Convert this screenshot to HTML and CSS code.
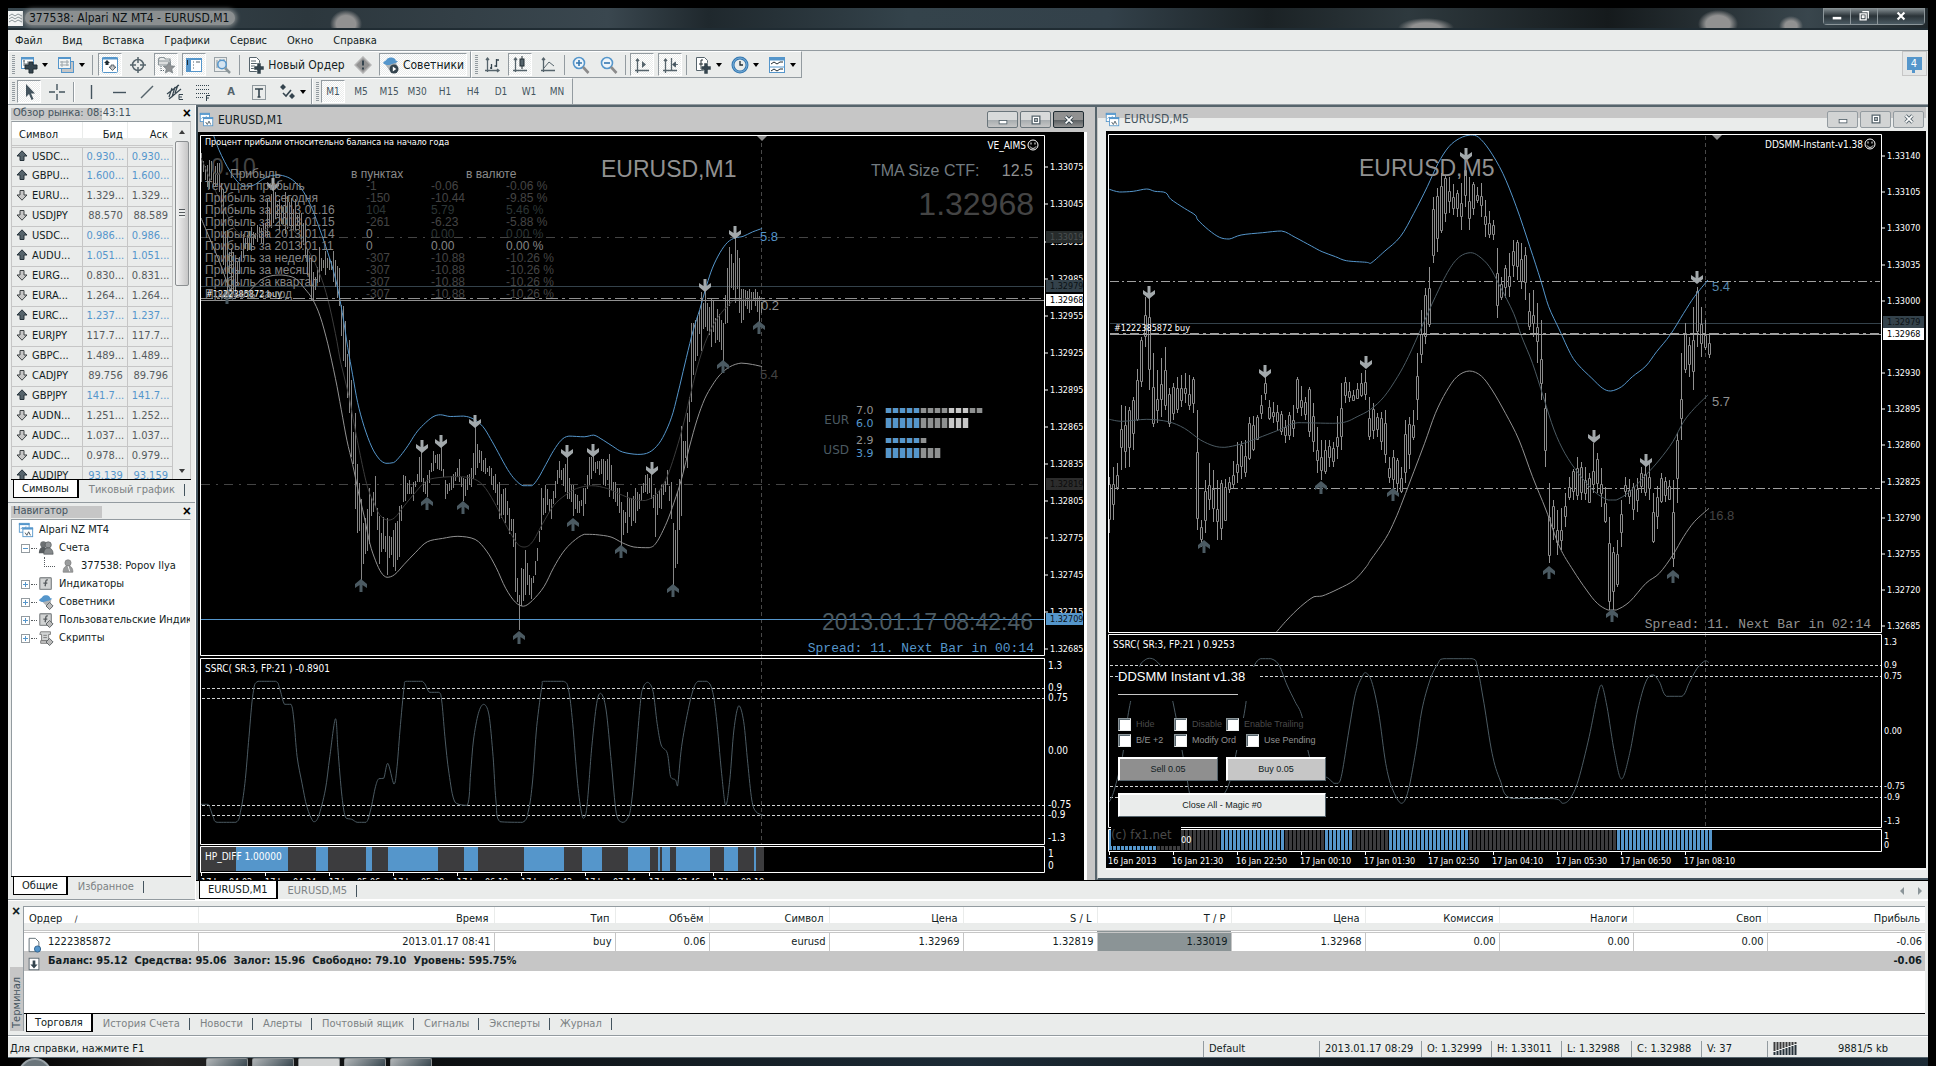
FILE: index.html
```html
<!DOCTYPE html>
<html lang="ru">
<head>
<meta charset="utf-8">
<title>377538: Alpari NZ MT4 - EURUSD,M1</title>
<link rel="stylesheet" href="styles.css">
</head>
<body>
<svg class="sprite" aria-hidden="true">
  <symbol id="i-charts" viewBox="0 0 18 18"><rect x="1.500" y="1.500" width="11" height="10" fill="#fff" stroke="#5596cb"/><path d="M1 2.500h12" stroke="#5596cb" stroke-width="2"/><path d="M3 8l2-2 2 2 2-3" fill="none" stroke="#5596cb"/><rect x="5.500" y="6.500" width="11" height="10" fill="#fff" stroke="#5596cb"/><path d="M5 7.500h12" stroke="#5596cb" stroke-width="2"/><path d="M8 12l2 3 2-4 2 4" fill="none" stroke="#3f4d55"/></symbol>
  <symbol id="i-newchart" viewBox="0 0 18 18"><rect x="1.500" y="1.500" width="12" height="11" fill="#fff" stroke="#5596cb"/><path d="M1 2.500h13" stroke="#5596cb" stroke-width="2"/><path d="M3 5h2M4 4v6M4 8h5M8 5v3" stroke="#6a757b"/><path d="M9 6h4v3h4v4h-4v4H9v-4H5V9h4z" fill="#34444e" stroke="#202c33"/></symbol>
  <symbol id="i-windows" viewBox="0 0 18 18"><rect x="4.500" y="5.500" width="12" height="11" fill="#c6c6c6" stroke="#5596cb"/><rect x="1.500" y="1.500" width="12" height="11" fill="#f2f4f4" stroke="#5596cb"/><path d="M1 2h13" stroke="#5596cb" stroke-width="2"/><path d="M3 6h9M3 9h9M5 5v6M10 4v6" stroke="#9aa3a8"/></symbol>
  <symbol id="i-watch" viewBox="0 0 18 18"><rect x="1.500" y="1.500" width="15" height="15" rx="1" fill="#fff" stroke="#5596cb"/><path d="M1 2.500h16" stroke="#5596cb" stroke-width="2"/><path d="M6 4l3 3H7.500v2h-3V7H3z" fill="#202c33"/><path d="M11.500 14.500l3.500-3.500H13V9h-3v2H8z" fill="#c6c6c6" stroke="#3f4d55" stroke-width=".8"/></symbol>
  <symbol id="i-target" viewBox="0 0 18 18"><circle cx="9" cy="9" r="5.500" fill="none" stroke="#56646c" stroke-width="1.500"/><path d="M9 1v6M9 11v6M1 9h6M11 9h6" stroke="#56646c" stroke-width="1.500"/></symbol>
  <symbol id="i-folder" viewBox="0 0 18 18"><path d="M1.500 9V3L3 1.500h4L8.500 3H13v2" fill="#eaeceb" stroke="#8b9599" stroke-width="1.200"/><path d="M1.500 5h12v4h-12z" fill="#dcdede" stroke="#8b9599"/><path d="M4 10v5M4 14.500h4" stroke="#56646c" stroke-dasharray="1 1"/><path d="M12 6l1.800 3.800 4 .4-3 2.800.9 4-3.700-2-3.700 2 .9-4-3-2.800 4-.4z" fill="#8f9294" stroke="#6a757b" stroke-width=".6"/></symbol>
  <symbol id="i-nav" viewBox="0 0 18 18"><rect x="1.500" y="2.500" width="15" height="13" fill="#fff" stroke="#5596cb"/><path d="M1 3h16" stroke="#5596cb" stroke-width="2"/><path d="M4 3v12" stroke="#5596cb" stroke-width="4"/><path d="M2.500 4v5" stroke="#202c33"/><path d="M8 6h1M11 6h4M8 9h1M8 12h1" stroke="#56646c"/></symbol>
  <symbol id="i-tester" viewBox="0 0 18 18"><rect x="1.500" y="1.500" width="12" height="14" fill="#eaeceb" stroke="#9aa3a8"/><path d="M4 4v8M7 3v4M11 3v4" stroke="#8b9599"/><circle cx="9" cy="8.500" r="4.200" fill="#d5e4f0" stroke="#5596cb" stroke-width="1.500"/><path d="M12 12l5 5" stroke="#8b9599" stroke-width="2.500"/></symbol>
  <symbol id="i-order" viewBox="0 0 18 18"><path d="M2.500 1.500h7l3 3v11h-10z" fill="#fff" stroke="#56646c"/><path d="M4 5h5M4 7.500h7M4 10h4M4 12.500h3" stroke="#56646c"/><path d="M10 7h4v3h3v4h-3v4h-4v-4H7v-4h3z" fill="#34444e" stroke="#eaeceb" stroke-width=".5"/></symbol>
  <symbol id="i-alert" viewBox="0 0 18 18"><path d="M9 1l8 8-8 8-8-8z" fill="#919191" stroke="#b5b5b5" stroke-width="1.500"/><path d="M9 4.500v5M9 11.500v2" stroke="#34444e" stroke-width="2"/></symbol>
  <symbol id="i-expert" viewBox="0 0 18 18"><path d="M3 8l11-2 1 4-3 4H7z" fill="#b0b4b6"/><path d="M1 7c1-2 3-2 4-4 2-2 6-2 8 0 1 1 0 2 3 2-1 2-4 2-6 3s-6 2-9-1z" fill="#5596cb"/><circle cx="12" cy="13" r="4.500" fill="#34444e"/><path d="M10.800 10.500v5l3.500-2.500z" fill="#fff"/></symbol>
  <symbol id="i-bars" viewBox="0 0 18 18"><path d="M4.500 2v14M2 14.500h14M3 4l1.500-2L6 4M14 13l2 1.500L14 16" fill="none" stroke="#56646c" stroke-width="1.300"/><path d="M8.500 8v5M13.500 3v8M8 12h-1M14 4h2M11.500 10h2" stroke="#34444e" stroke-width="1.300"/></symbol>
  <symbol id="i-candles" viewBox="0 0 18 18"><path d="M4.500 2v14M2 14.500h14M3 4l1.500-2L6 4" fill="none" stroke="#56646c" stroke-width="1.300"/><rect x="9" y="3" width="4" height="7" fill="#56646c" stroke="#202c33"/><path d="M11 0v3M11 10v3" stroke="#202c33"/></symbol>
  <symbol id="i-line" viewBox="0 0 18 18"><path d="M4.500 2v14M2 14.500h14M3 4l1.500-2L6 4" fill="none" stroke="#56646c" stroke-width="1.300"/><path d="M5 12l5-6 5 4" fill="none" stroke="#56646c"/></symbol>
  <symbol id="i-zoomin" viewBox="0 0 18 18"><circle cx="7" cy="7" r="5.500" fill="#eef5fa" stroke="#5596cb" stroke-width="1.600"/><path d="M7 4v6M4 7h6" stroke="#3477b0" stroke-width="1.600"/><path d="M11 11l5.500 6" stroke="#8b8b8b" stroke-width="2.600"/></symbol>
  <symbol id="i-zoomout" viewBox="0 0 18 18"><circle cx="7" cy="7" r="5.500" fill="#eef5fa" stroke="#5596cb" stroke-width="1.600"/><path d="M4 7h6" stroke="#3477b0" stroke-width="1.600"/><path d="M11 11l5.500 6" stroke="#8b8b8b" stroke-width="2.600"/></symbol>
  <symbol id="i-scroll" viewBox="0 0 18 18"><path d="M4.500 3v14M2 14.500h14M3 5l1.500-2L6 5" fill="none" stroke="#56646c" stroke-width="1.300"/><path d="M9 5v7l4-3.500z" fill="#56646c"/></symbol>
  <symbol id="i-shift" viewBox="0 0 18 18"><path d="M4.500 3v14M2 14.500h14M3 5l1.500-2L6 5M10.500 2v12" fill="none" stroke="#56646c" stroke-width="1.300"/><path d="M11.500 8.500l3-2.500v5zM14 8.500h3" fill="#44545e" stroke="#44545e" stroke-width=".8"/></symbol>
  <symbol id="i-ind" viewBox="0 0 18 18"><path d="M2.500 1.500h8l3 3v10h-11z" fill="#fff" stroke="#56646c"/><path d="M9 4H7v9M5 8h4" fill="none" stroke="#202c33"/><path d="M10 7h4v3h3v4h-3v4h-4v-4H7v-4h3z" fill="#34444e" stroke="#eaeceb" stroke-width=".5"/></symbol>
  <symbol id="i-clock" viewBox="0 0 18 18"><circle cx="9" cy="9" r="7" fill="#eaeceb" stroke="#3477b0" stroke-width="3"/><circle cx="9" cy="9" r="7" fill="none" stroke="#7ab1db"/><path d="M9 5v4h3" fill="none" stroke="#202c33" stroke-width="1.300"/></symbol>
  <symbol id="i-tpl" viewBox="0 0 18 18"><rect x="1.500" y="1.500" width="15" height="15" fill="#fff" stroke="#5596cb"/><path d="M1 3h16" stroke="#5596cb" stroke-width="3"/><path d="M1 11h16" stroke="#5596cb"/><path d="M3 8l3-2 3 2 3-2h3M3 15l3-2 3 2 3-2h3" fill="none" stroke="#202c33"/></symbol>
  <symbol id="i-cursor" viewBox="0 0 18 18"><path d="M6 1v13l3-3 2.500 6 2-1-2.500-5.500h4z" fill="#44545e"/></symbol>
  <symbol id="i-cross" viewBox="0 0 18 18"><path d="M9 1v6M9 11v6M1 9h6M11 9h6" stroke="#44545e" stroke-width="1.400"/></symbol>
  <symbol id="i-vline" viewBox="0 0 18 18"><path d="M9.500 2v14" stroke="#44545e" stroke-width="1.400"/></symbol>
  <symbol id="i-hline" viewBox="0 0 18 18"><path d="M3 9.500h13" stroke="#44545e" stroke-width="1.400"/></symbol>
  <symbol id="i-trend" viewBox="0 0 18 18"><path d="M3 15L15 3" stroke="#56646c" stroke-width="1.400"/></symbol>
  <symbol id="i-chan" viewBox="0 0 18 18"><path d="M1 11L13 2M3 16L15 6M3 14l3-9M6 14l3-10M9 10l3-8" stroke="#34444e" stroke-width="1.200"/><path d="M17 11.500h-4v5h4M13 14h3" fill="none" stroke="#34444e"/></symbol>
  <symbol id="i-fib" viewBox="0 0 18 18"><path d="M2 2.500h14M2 6.500h14M2 10.500h14M2 14.500h8" stroke="#34444e" stroke-dasharray="1 1"/><path d="M16 12.500h-3.500V18M12.500 15H15" fill="none" stroke="#34444e"/></symbol>
  <symbol id="i-text" viewBox="0 0 18 18"><rect x="2.500" y="2.500" width="13" height="14" fill="none" stroke="#34444e" stroke-dasharray="1 1"/><path d="M5 6h8M9 6v8M7.500 14h3" stroke="#34444e" stroke-width="1.600"/></symbol>
  <symbol id="i-arrows" viewBox="0 0 18 18"><path d="M5 1l3 3-3 3-3-3zM14 10l3 3-3 3-3-3z" fill="#34444e"/><path d="M5 10l3 3 5-6" fill="none" stroke="#34444e" stroke-width="1.600"/></symbol>
  <symbol id="i-up" viewBox="0 0 12 12"><path d="M6 .8L11 6H8v4.500H4V6H1z" fill="#56646c" stroke="#26323a"/></symbol>
  <symbol id="i-down" viewBox="0 0 12 12"><path d="M6 11.200L11 6H8V1.500H4V6H1z" fill="#c6c6c6" stroke="#3c4143"/></symbol>
  <symbol id="i-users" viewBox="0 0 18 18"><circle cx="6" cy="5" r="3.500" fill="#6c7072"/><path d="M1 15c0-5 2-7 5-7s5 2 5 7z" fill="#565b5e"/><circle cx="11.500" cy="5.500" r="3.500" fill="#919496" stroke="#4b4f51" stroke-width=".7"/><path d="M6.500 16c0-5 2-7 5-7s5.500 2 5.500 7z" fill="#85898b" stroke="#4b4f51" stroke-width=".7"/></symbol>
  <symbol id="i-user" viewBox="0 0 18 18"><circle cx="9" cy="5.500" r="3.500" fill="#9a9c9d" stroke="#777" stroke-width=".7"/><path d="M3.500 16c0-5 2-7 5.500-7s5.500 2 5.500 7z" fill="#9a9c9d" stroke="#777" stroke-width=".7"/><path d="M9 9l2 6" stroke="#fff"/></symbol>
  <symbol id="i-func" viewBox="0 0 18 18"><rect x="2" y="2" width="13" height="13" rx="1" fill="#d2d4d4" stroke="#8b8f91" stroke-width="1.500"/><path d="M11 4.500c-3-.8-2 3-3 7M6 8h4.500" fill="none" stroke="#565b5e" stroke-width="1.500"/></symbol>
  <symbol id="i-funcg" viewBox="0 0 18 18"><use href="#i-func"/><path d="M13 9.500l4 4-4 4-4-4z" fill="#bbb" stroke="#565b5e"/></symbol>
  <symbol id="i-hat" viewBox="0 0 18 18"><path d="M4 8l11-2-1 6-5 1z" fill="#aeb2b4"/><path d="M1 7c1-2 3-2 4-4 2-2 6-2 8 0 1 1 0 2 3 2-1 2-4 2-6 3s-6 2-9-1z" fill="#5596cb"/><path d="M13 9.500l4 4-4 4-4-4z" fill="#bbb" stroke="#565b5e"/></symbol>
  <symbol id="i-script" viewBox="0 0 18 18"><path d="M3 2h11v3h-2v7H4V5H2z" fill="#d2d4d4" stroke="#777"/><path d="M6 6h4M6 8.500h4M3 12h8v3H3z" fill="#c6c6c6" stroke="#777"/><path d="M13 9.500l4 4-4 4-4-4z" fill="#bbb" stroke="#565b5e"/></symbol>
  <symbol id="i-doc" viewBox="0 0 18 18"><path d="M3.500 1.500h7l4 4v11h-11z" fill="#fff" stroke="#56646c"/><circle cx="13" cy="13.500" r="3.500" fill="#5596cb" stroke="#2e5f8a"/></symbol>
  <symbol id="i-bal" viewBox="0 0 18 18"><rect x="3.500" y="2.500" width="11" height="13" fill="#fff" stroke="#56646c"/><path d="M9 14l4-4.500h-2.500V5h-3v4.500H5z" fill="#34444e"/></symbol>
  <symbol id="a-down" viewBox="0 0 12 13"><path d="M4.500 0h3v7L12 4v4l-6 5-6-5V4l4.500 3z" fill="#a3a9ac"/></symbol>
  <symbol id="a-up" viewBox="0 0 12 13"><path d="M4.500 13h3V6L12 9V5L6 0 0 5v4l4.500-3z" fill="#4b5a62"/></symbol>
  <symbol id="smile" viewBox="0 0 12 12"><circle cx="6" cy="6" r="5" fill="none" stroke="#fff"/><path d="M4 3.500v2M8 3.500v2" stroke="#fff"/><path d="M3 7.500c1.500 2.500 4.500 2.500 6 0" fill="none" stroke="#fff"/></symbol>
</svg>

<div class="app">
  <header class="title">
    <svg class="logo" viewBox="0 0 15 15"><rect width="15" height="15" fill="#f2f4f4"/><path d="M1 5l3-2 3 2 3-2 4 2M1 8l3-2 3 2 3-2 4 2M1 11l3-2 3 2 3-2 4 2" fill="none" stroke="#8b9599"/></svg>
    <h1>377538: Alpari NZ MT4 - EURUSD,M1</h1>
    <div class="sysbtns">
      <button aria-label="Свернуть"><svg viewBox="0 0 14 14"><path d="M2 8h10v3H2z" fill="#fff"/></svg></button><button aria-label="Развернуть"><svg viewBox="0 0 14 14"><path d="M5 2h7v8M2.500 4.500h7v7h-7zM5 7h2v2H5z" fill="none" stroke="#fff" stroke-width="1.500"/></svg></button><button class="wide" aria-label="Закрыть"><svg viewBox="0 0 14 14"><path d="M3 3l8 8M11 3l-8 8" stroke="#fff" stroke-width="2.500"/></svg></button>
    </div>
  </header>

  <nav class="menu">
    <a href="#">Файл</a><a href="#">Вид</a><a href="#">Вставка</a><a href="#">Графики</a><a href="#">Сервис</a><a href="#">Окно</a><a href="#">Справка</a>
  </nav>

  <div class="tb first">
    <div class="tbgroup">
      <i class="grip"></i>
      <button class="drop" aria-label="Новый график"><svg><use href="#i-newchart"/></svg></button>
      <button class="drop" aria-label="Профили"><svg><use href="#i-windows"/></svg></button>
      <i class="sep"></i>
      <button class="on" aria-label="Обзор рынка"><svg><use href="#i-watch"/></svg></button>
      <button aria-label="Окно данных"><svg><use href="#i-target"/></svg></button>
      <button class="on" aria-label="Навигатор"><svg><use href="#i-folder"/></svg></button>
      <button class="on" aria-label="Терминал"><svg><use href="#i-nav"/></svg></button>
      <button aria-label="Тестер"><svg><use href="#i-tester"/></svg></button>
      <i class="sep"></i>
      <button class="label order"><svg><use href="#i-order"/></svg>Новый Ордер</button>
      <button aria-label="Редактор"><svg><use href="#i-alert"/></svg></button>
      <button class="label on experts"><svg><use href="#i-expert"/></svg>Советники</button>
    </div>
    <div class="tbgroup tight">
      <i class="grip"></i>
      <button aria-label="Бары"><svg><use href="#i-bars"/></svg></button>
      <button class="on" aria-label="Свечи"><svg><use href="#i-candles"/></svg></button>
      <button aria-label="Линия"><svg><use href="#i-line"/></svg></button>
      <i class="sep"></i>
      <button aria-label="Увеличить"><svg><use href="#i-zoomin"/></svg></button>
      <button aria-label="Уменьшить"><svg><use href="#i-zoomout"/></svg></button>
      <i class="sep"></i>
      <button class="on" aria-label="Автопрокрутка"><svg><use href="#i-scroll"/></svg></button>
      <button class="on" aria-label="Сдвиг графика"><svg><use href="#i-shift"/></svg></button>
      <i class="sep"></i>
      <button class="drop" aria-label="Индикаторы"><svg><use href="#i-ind"/></svg></button>
      <button class="drop" aria-label="Периоды"><svg><use href="#i-clock"/></svg></button>
      <button class="drop" aria-label="Шаблоны"><svg><use href="#i-tpl"/></svg></button>
    </div>
    <button class="chat">4</button>
  </div>

  <div class="tb second">
    <div class="tbgroup">
      <i class="grip"></i>
      <button class="on" aria-label="Курсор"><svg><use href="#i-cursor"/></svg></button>
      <button aria-label="Перекрестие"><svg><use href="#i-cross"/></svg></button>
      <i class="sep thin"></i>
      <button aria-label="Вертикальная линия"><svg><use href="#i-vline"/></svg></button>
      <button aria-label="Горизонтальная линия"><svg><use href="#i-hline"/></svg></button>
      <button aria-label="Трендовая линия"><svg><use href="#i-trend"/></svg></button>
      <button aria-label="Канал"><svg><use href="#i-chan"/></svg></button>
      <button aria-label="Фибоначчи"><svg><use href="#i-fib"/></svg></button>
      <button class="letter">A</button>
      <button aria-label="Метка"><svg><use href="#i-text"/></svg></button>
      <button class="drop" aria-label="Стрелки"><svg><use href="#i-arrows"/></svg></button>
    </div>
    <div class="tbgroup periods">
      <i class="grip"></i>
      <button class="on">M1</button><button>M5</button><button>M15</button><button>M30</button><button>H1</button><button>H4</button><button>D1</button><button>W1</button><button>MN</button>
    </div>
  </div>

  <main class="work">
    <aside class="side">
      <section class="panel">
        <h2 class="ptitle"><span>Обзор рынка: 08:43:11</span><button aria-label="Закрыть">×</button></h2>
        <div class="quotes">
          <div class="qclip">
          <table>
            <thead><tr><th>Символ</th><th>Бид</th><th>Аск</th></tr></thead>
            <tbody id="quotes"></tbody>
          </table>
          </div>
          <div class="scroll"><i class="sup"></i><i class="thumb"></i><i class="sdown"></i></div>
        </div>
        <div class="tabs"><button class="cur">Символы</button><button>Тиковый график</button></div>
      </section>
      <section class="panel nav">
        <h2 class="ptitle"><span>Навигатор</span><button aria-label="Закрыть">×</button></h2>
        <ul class="tree">
          <li class="root"><svg><use href="#i-charts"/></svg>Alpari NZ MT4</li>
          <li><b class="minus"></b><i></i><svg><use href="#i-users"/></svg>Счета</li>
          <li class="sub"><i></i><svg><use href="#i-user"/></svg>377538: Popov Ilya</li>
          <li><b></b><i></i><svg><use href="#i-func"/></svg>Индикаторы</li>
          <li><b></b><i></i><svg><use href="#i-hat"/></svg>Советники</li>
          <li><b></b><i></i><svg><use href="#i-funcg"/></svg>Пользовательские Индикаторы</li>
          <li><b></b><i></i><svg><use href="#i-script"/></svg>Скрипты</li>
        </ul>
        <div class="tabs"><button class="cur">Общие</button><button>Избранное</button></div>
      </section>
    </aside>

    <div class="mdi">
      <div class="windows">
        <section class="win active">
          <h2 class="wtitle"><svg><use href="#i-charts"/></svg><span>EURUSD,M1</span>
            <button aria-label="Свернуть"><svg viewBox="0 0 14 14"><rect x="2.500" y="7.500" width="9" height="4" fill="#fff" stroke="#56646c"/></svg></button><button aria-label="Развернуть"><svg viewBox="0 0 14 14"><path d="M2.500 2.500h9v9h-9zM5.500 5.500h3v3h-3z" fill="#fff" stroke="#56646c" stroke-width="1.500"/></svg></button><button class="dark" aria-label="Закрыть"><svg viewBox="0 0 14 14"><path d="M3 3l8 8M11 3l-8 8" stroke="#34444e" stroke-width="4"/><path d="M3 3l8 8M11 3l-8 8" stroke="#fff" stroke-width="2"/></svg></button>
          </h2>
          <div class="chart">
            <svg class="plot" id="m1"><g transform="translate(-198 -132)">
              <g id="m1-draw"></g>
              <text x="211" y="175" class="t22 dim">0.10</text>
              <text x="601" y="177" class="t23 mid">EURUSD,M1</text>
              <text x="205" y="145" class="t9 white">Процент прибыли относительно баланса на начало года</text>
              <text x="1026" y="149" class="t10 white end">VE_AIMS</text>
              <use href="#smile" x="1027" y="139" width="12" height="12"/>
              <text x="871" y="176" class="t16 steel">TMA Size CTF:</text>
              <text x="1033" y="176" class="t16 mid end">12.5</text>
              <text x="1034" y="215" class="t32 dim end">1.32968</text>
              <text x="760" y="241" class="t13 blue">5.8</text>
              <text x="761" y="310" class="t13 mid">0.2</text>
              <text x="760" y="379" class="t13 dim">5.4</text>
              <text x="849" y="424" class="v12 slate end">EUR</text>
              <text x="849" y="454" class="v12 slate end">USD</text>
              <text x="856" y="414" class="v11 mid">7.0</text>
              <text x="856" y="427" class="v11 blue">6.0</text>
              <text x="856" y="444" class="v11 mid">2.9</text>
              <text x="856" y="457" class="v11 blue">3.9</text>
              <text x="1033" y="630" class="t23 slate end">2013.01.17 08:42:46</text>
              <text x="1034" y="652" class="mono blue end">Spread: 11. Next Bar in 00:14</text>
              <text x="206" y="297" class="t9 white">#1222385872 buy</text>
              <text x="205" y="672" class="t10 white">SSRC( SR:3, FP:21 ) -0.8901</text>
              <text x="205" y="860" class="t10 white">HP_DIFF 1.00000</text>
            </g></svg>
            <table class="profit">
              <thead><tr><th class="ind">Прибыль</th><th>в пунктах</th><th class="gap"></th><th class="cur">в валюте</th></tr></thead>
              <tbody>
                <tr><td>Текущая прибыль</td><td>-1</td><td>-0.06</td><td>-0.06 %</td></tr>
                <tr><td>Прибыль за сегодня</td><td>-150</td><td>-10.44</td><td>-9.85 %</td></tr>
                <tr class="faint"><td>Прибыль за 2013.01.16</td><td>104</td><td>5.79</td><td>5.46 %</td></tr>
                <tr><td>Прибыль за 2013.01.15</td><td>-261</td><td>-6.23</td><td>-5.88 %</td></tr>
                <tr class="faint"><td>Прибыль за 2013.01.14</td><td class="lit">0</td><td>0.00</td><td>0.00 %</td></tr>
                <tr><td>Прибыль за 2013.01.11</td><td class="lit">0</td><td class="lit">0.00</td><td class="lit">0.00 %</td></tr>
                <tr><td>Прибыль за неделю</td><td>-307</td><td>-10.88</td><td>-10.26 %</td></tr>
                <tr><td>Прибыль за месяц</td><td>-307</td><td>-10.88</td><td>-10.26 %</td></tr>
                <tr><td>Прибыль за квартал</td><td>-307</td><td>-10.88</td><td>-10.26 %</td></tr>
                <tr><td>Прибыль за год</td><td>-307</td><td>-10.88</td><td>-10.26 %</td></tr>
              </tbody>
            </table>
          </div>
        </section>

        <section class="win back">
          <h2 class="wtitle"><svg><use href="#i-charts"/></svg><span>EURUSD,M5</span>
            <button aria-label="Свернуть"><svg viewBox="0 0 14 14"><rect x="2.500" y="7.500" width="9" height="4" fill="#fff" stroke="#56646c"/></svg></button><button aria-label="Развернуть"><svg viewBox="0 0 14 14"><path d="M2.500 2.500h9v9h-9zM5.500 5.500h3v3h-3z" fill="#fff" stroke="#56646c" stroke-width="1.500"/></svg></button><button aria-label="Закрыть"><svg viewBox="0 0 14 14"><path d="M3 3l8 8M11 3l-8 8" stroke="#56646c" stroke-width="4"/><path d="M3 3l8 8M11 3l-8 8" stroke="#fff" stroke-width="2"/></svg></button>
          </h2>
          <div class="chart">
            <svg class="plot" id="m5"><g transform="translate(-1106 -131)">
              <g id="m5-draw"></g>
              <text x="1359" y="176" class="t23 mid">EURUSD,M5</text>
              <text x="1863" y="148" class="t10 white end">DDSMM-Instant-v1.38</text>
              <use href="#smile" x="1864" y="138" width="12" height="12"/>
              <text x="1712" y="291" class="t13 steelblue">5.4</text>
              <text x="1712" y="406" class="t13 mid">5.7</text>
              <text x="1709" y="520" class="t13 dim">16.8</text>
              <text x="1114" y="331" class="t9 white">#1222385872 buy</text>
              <text x="1871" y="628" class="mono mid end">Spread: 11. Next Bar in 02:14</text>
              <text x="1113" y="648" class="t10 white">SSRC( SR:3, FP:21 ) 0.9253</text>
            </g></svg>
            <form class="ea">
              <h3>DDSMM Instant v1.38</h3>
              <div class="row off"><label><input type="checkbox">Hide</label><label><input type="checkbox">Disable</label><label><input type="checkbox">Enable Trailing</label></div>
              <div class="row"><label><input type="checkbox">B/E +2</label><label class="w2"><input type="checkbox">Modify Ord</label><label><input type="checkbox">Use Pending</label></div>
              <div class="btns"><button type="button" class="sell">Sell 0.05</button><button type="button" class="buy">Buy 0.05</button><button type="button" class="all">Close All - Magic #0</button></div>
            </form>
            <div class="copy">(c) fx1.net</div>
          </div>
        </section>
      </div>
      <div class="tabs mtabs"><button class="cur">EURUSD,M1</button><button>EURUSD,M5</button><span class="pager"><i class="l"></i><i class="r"></i></span></div>
    </div>
  </main>

  <section class="term">
    <div class="handle"><button aria-label="Закрыть">×</button><span>Терминал</span></div>
    <div class="tbody">
      <table class="orders">
        <colgroup><col class="c1"><col class="c2"><col class="c3"><col class="c4"><col class="c5"><col class="c6"><col class="c6"><col class="c6"><col class="c6"><col class="c6"><col class="c6"><col class="c6"><col></colgroup>
        <thead><tr><th>Ордер &nbsp; &nbsp;<small>∕</small></th><th>Время</th><th>Тип</th><th>Объём</th><th>Символ</th><th>Цена</th><th>S / L</th><th>T / P</th><th>Цена</th><th>Комиссия</th><th>Налоги</th><th>Своп</th><th>Прибыль</th></tr></thead>
        <tbody>
          <tr><td><svg><use href="#i-doc"/></svg>1222385872</td><td>2013.01.17 08:41</td><td>buy</td><td>0.06</td><td>eurusd</td><td>1.32969</td><td>1.32819</td><td class="tp">1.33019</td><td>1.32968</td><td>0.00</td><td>0.00</td><td>0.00</td><td>-0.06</td></tr>
          <tr class="bal"><td colspan="12"><svg><use href="#i-bal"/></svg>Баланс: 95.12&nbsp; Средства: 95.06&nbsp; Залог: 15.96&nbsp; Свободно: 79.10&nbsp; Уровень: 595.75%</td><td>-0.06</td></tr>
        </tbody>
      </table>
      <div class="tabs ttabs"><button class="cur">Торговля</button><button>История Счета</button><button>Новости</button><button>Алерты</button><button>Почтовый ящик</button><button>Сигналы</button><button>Эксперты</button><button>Журнал</button></div>
    </div>
  </section>

  <footer class="status">
    <span class="help">Для справки, нажмите F1</span><span class="s1">Default</span><span class="s2">2013.01.17 08:29</span><span class="s3">O: 1.32999</span><span class="s3">H: 1.33011</span><span class="s3">L: 1.32988</span><span class="s3">C: 1.32988</span><span class="s4">V: 37</span><span class="s5"><svg viewBox="0 0 24 13"><path d="M1.500 0v9M4.500 0v8M7.500 0v7M10.500 0v6M13.500 0v5M16.500 0v4M19.500 0v3M22.500 0v2" stroke="#3c3c3c" stroke-width="2"/><path d="M1.500 10v3M4.500 9v4M7.500 8v5M10.500 7v6M13.500 6v7M16.500 5v8M19.500 4v9M22.500 3v10" stroke="#26323a" stroke-width="2"/></svg>9881/5 kb</span>
  </footer>
</div>
<div class="taskbar"><i class="orb"></i><i class="task"></i><i class="task"></i><i class="task lit"></i><i class="task"></i><i class="task"></i></div>
<script src="charts.js"></script>
</body>
</html>
```
FILE: styles.css
```css
* { box-sizing: border-box; }
html, body { height: 100%; }
body { margin: 0; padding: 8px 0 0; background: #000; color: #111c22; font: 11px/14px "DejaVu Sans Condensed", "Noto Sans", sans-serif; display: flex; flex-direction: column; overflow: hidden; }
button { font: inherit; color: inherit; border: 0; background: none; padding: 0; }
h1, h2, h3 { margin: 0; font: inherit; }
a { color: inherit; text-decoration: none; }
svg { width: 18px; height: 18px; flex: none; display: block; }
.sprite { position: absolute; width: 0; height: 0; }
.app { flex: 1; min-height: 0; margin: 0 8px; display: flex; flex-direction: column; background: #eaeceb; }

.title { height: 22px; display: flex; align-items: center; background: radial-gradient(ellipse 16px 14px at 338px 16px, #919191 60%, transparent 100%), radial-gradient(ellipse 28px 10px at 1418px 20px, #919191 50%, transparent 100%), radial-gradient(ellipse 20px 14px at 1710px 16px, #919191 60%, transparent 100%), radial-gradient(ellipse 12px 10px at 1783px 18px, #919191 50%, transparent 100%), linear-gradient(90deg, #3a4850 0, #2c373d 300px, #3a474f 600px, #1f282d 700px, #34434b 900px, #33414a 1100px, #1b2225 1260px, #2e393e 1400px, #151a1c 1600px, #39464d 1800px, #20282c 100%); border-bottom: 2px solid #202c33; }
.logo { width: 15px; height: 15px; }
.title h1 { font-size: 12px; color: #0b1114; margin-left: 2px; padding: 0 6px 0 4px; flex: none; background: #8b8f90; border-radius: 8px; box-shadow: 0 0 4px 2px #7c8284; line-height: 14px; }
.sysbtns { display: flex; margin-left: auto; align-self: flex-start; margin-right: 3px; border: 1px solid #8b9599; border-top: 0; border-radius: 0 0 4px 4px; }
.sysbtns button { width: 27px; height: 16px; display: grid; place-items: center; background: linear-gradient(#8b9599, #2a3338 50%, #4b5a62); border-right: 1px solid #8b9599; }
.sysbtns .wide { width: 46px; border: 0; }
.sysbtns svg { width: 12px; height: 12px; }

.menu { height: 21px; display: flex; align-items: center; padding: 1px 0 0 7px; gap: 20px; font-size: 11px; border-bottom: 1px solid #939ba0; }

.tb { display: flex; height: 27px; align-items: stretch; }
.tb.second { border-bottom: 1px solid #939ba0; }
.tbgroup { display: flex; align-items: center; gap: 4px; padding: 0 3px; border-right: 1px solid #939ba0; border-bottom: 1px solid #939ba0; border-top: 1px solid #fff; border-left: 1px solid #fff; }
.second .tbgroup { border-bottom: 0; }
.grip { width: 3px; height: 19px; margin-right: -2px; background: repeating-linear-gradient(#939ba0 0 1px, transparent 1px 2px); }
.sep { width: 1px; height: 20px; background: #939ba0; margin: 0 1px; }
.tight .sep { margin: 0; }
.sep.thin { margin: 0; width: 2px; background: linear-gradient(90deg, #939ba0 50%, #fff 50%); }
.tb button { min-width: 24px; height: 23px; display: flex; align-items: center; justify-content: center; }
.tb .on { background: repeating-conic-gradient(#fff 0 25%, #eaeceb 0 50%) 0 0 / 2px 2px; border: 1px solid; border-color: #939ba0 #fff #fff #939ba0; }
.drop::after { content: ""; border: 3px solid transparent; border-top: 4px solid #000; border-bottom: 0; margin-left: 4px; }
.tb .drop { width: 33px; }
.tb .label { font-size: 12px; gap: 3px; }
.tb .order { width: 102px; }
.tb .experts { width: 88px; }
.letter { font-weight: bold; color: #56646c; }
.periods button { color: #44545e; font-size: 10px; }
.tb .chat { margin: 0 1px 0 auto; width: 25px; height: 25px; border: 1px solid #c6c6c6; color: #fff; background: linear-gradient(#5596cb, #5596cb) 4px 5px / 15px 13px no-repeat, linear-gradient(#5596cb, #5596cb) 9px 18px / 3px 3px no-repeat, #e4e6e6; padding-right: 1px; }

.work { flex: 1; min-height: 0; display: flex; }
.side { width: 188px; flex: none; display: flex; flex-direction: column; border-right: 1px solid #fff; }
.panel { height: 398px; flex: none; display: flex; flex-direction: column; padding: 0 4px 0 3px; border-bottom: 1px solid #939ba0; }
.panel.nav { flex: 1; min-height: 0; height: auto; }
.ptitle { height: 15px; margin-bottom: 1px; display: flex; justify-content: space-between; align-items: center; color: #44545e; background: linear-gradient(#c6c6c6, #c6c6c6) 0 100% / 91px 12px no-repeat; padding-left: 2px; font-size: 11px; }
.ptitle button { font: bold 14px/12px "Liberation Sans", sans-serif; color: #000; }
.quotes { flex: 1; min-height: 0; display: flex; border: 1px solid #c6c6c6; border-top-color: #939ba0; border-bottom: 0; }
.qclip { flex: 1; overflow: hidden; }
.quotes table { width: 100%; table-layout: fixed; border-collapse: collapse; }
.quotes th, .quotes td { height: 20px; padding: 0 4px; text-align: right; border-bottom: 1px solid #c6c6c6; border-right: 1px solid #c6c6c6; font-weight: normal; white-space: nowrap; overflow: hidden; }
.quotes td { color: #565b5e; }
.quotes th { height: 24px; padding-top: 3px; background: linear-gradient(#fff 70%, #eaeceb 70%); border-bottom: 3px double #c6c6c6; border-right-color: #eaeceb; }
.quotes th:first-child, .quotes td:first-child { text-align: left; width: 70px; color: #111c22; }
.quotes th:first-child { padding-left: 7px; }
.quotes td svg { width: 12px; height: 12px; display: inline-block; vertical-align: -2px; margin-right: 4px; }
.quotes .up td { color: #5596cb; }
.quotes .up td:first-child { color: #111c22; }
.scroll { width: 17px; display: flex; flex-direction: column; align-items: center; background: #eaeceb; padding: 8px 0 7px; }
.sup { border: 3px solid transparent; border-top: 0; border-bottom: 4px solid #3c3c3c; }
.sdown { border: 3px solid transparent; border-bottom: 0; border-top: 4px solid #3c3c3c; margin-top: auto; }
.thumb { width: 14px; height: 145px; margin-top: 7px; border: 1px solid #8b8f91; border-radius: 2px; background: repeating-linear-gradient(#565b5e 0 1px, #eaeceb 1px 3px) center / 6px 9px no-repeat, linear-gradient(90deg, #f2f2f2, #c6c6c6); }

.tabs { display: flex; align-items: flex-start; border-top: 1px solid #000; height: 23px; padding-left: 2px; margin-top: -1px; }
.tabs button { padding: 2px 10px 0; height: 17px; color: #7c8284; position: relative; white-space: nowrap; }
.tabs button::after { content: ""; position: absolute; right: 0; top: 4px; height: 12px; border-right: 1px solid #44545e; }
.tabs .cur { color: #111c22; background: #fff; border: solid #000; border-width: 0 2px 1px 1px; height: 18px; padding: 1px 8px 0; }
.tabs .cur::after { display: none; }

.tree { flex: 1; min-height: 0; overflow: hidden; margin: 0; padding: 1px 0 0 6px; list-style: none; background: #fff; border: 1px solid #939ba0; border-right-color: #eaeceb; border-bottom: 0; }
.tree li { height: 18px; display: flex; align-items: center; gap: 5px; padding-left: 3px; white-space: nowrap; font-size: 11px; }
.tree svg { width: 16px; height: 16px; }
.tree .root { padding-left: 0; }
.tree b { width: 9px; height: 9px; flex: none; border: 1px solid #939ba0; background: linear-gradient(#5596cb, #5596cb) center / 5px 1px no-repeat, linear-gradient(#5596cb, #5596cb) center / 1px 5px no-repeat; }
.tree b.minus { background: linear-gradient(#5596cb, #5596cb) center / 5px 1px no-repeat; }
.tree i { width: 6px; height: 1px; margin: 0 -4px; flex: none; border-top: 1px dotted #565b5e; }
.tree .sub { padding-left: 26px; }
.tree .sub i { width: 11px; margin: 0; height: 10px; align-self: flex-start; border-top: 0; border-left: 1px dotted #565b5e; border-bottom: 1px dotted #565b5e; }

.mdi { flex: 1; min-width: 0; display: flex; flex-direction: column; }
.windows { flex: 1; min-height: 0; display: grid; grid-template-columns: 901fr 831fr; border-top: 2px solid #56646c; }
.win { min-width: 0; min-height: 0; display: flex; flex-direction: column; }
.wtitle { height: 25px; flex: none; display: flex; align-items: center; gap: 2px; font-size: 12px; }
.wtitle > svg { width: 15px; height: 15px; margin-left: 1px; }
.wtitle span { flex: 1; padding-left: 2px; }
.wtitle button { width: 31px; height: 17px; display: grid; place-items: center; border: 1px solid #6a757b; border-radius: 2px; background: linear-gradient(#d8dada 50%, #a4aaad 50%, #c6c6c6); }
.back .wtitle button { border-color: #939ba0; background: #d2d4d4; }
.wtitle button.dark { background: linear-gradient(#919191 50%, #565b5e 50%, #919191); border-color: #202c33; }
.wtitle button svg { width: 12px; height: 12px; }
.win.active { background: #c6c6c6; border-left: 2px solid #44545e; border-right: 2px solid #56646c; }
.active .wtitle { padding-right: 11px; }
.active .chart { margin-right: 8px; border-right: 3px solid #fff; }
.win.back { background: #eaeceb; padding: 0 2px 8px 8px; border-bottom: 2px solid #44545e; border-left: 1px solid #c6c6c6; }
.back .wtitle { height: 24px; color: #44545e; background: linear-gradient(#c6c6c6 11px, #eaeceb 11px); margin-left: -8px; padding: 0 2px 0 6px; }
.chart { position: relative; flex: 1; min-height: 0; background: #000; overflow: hidden; border-bottom: 2px solid #f8f8f8; }
.active .chart { border-bottom: 0; }
.plot { width: 100%; height: 100%; font-family: "Liberation Sans", sans-serif; }
.plot path { fill: none; }
.t9, .t10 { font-family: "DejaVu Sans Condensed", "Noto Sans", sans-serif; }
.t9 { font-size: 9px; }
.t10 { font-size: 10px; }
.t13 { font-size: 13px; }
.t16 { font-size: 16px; }
.t22, .t23 { font-size: 23px; }
.t32 { font-size: 32px; }
.v11, .v12 { font-family: "DejaVu Sans", sans-serif; font-size: 11px; }
.v12 { font-size: 12px; }
.mono { font-family: "Liberation Mono", monospace; font-size: 13px; }
.end { text-anchor: end; }
.white { fill: #fff; }
.black { fill: #000; }
.mid { fill: #919191; }
.dim { fill: #444; }
.slate { fill: #4b5a62; }
.steel { fill: #727b80; }
.steelblue { fill: #5585aa; }
.blue { fill: #5596cb; }

.profit { position: absolute; left: 7px; top: 36px; border-collapse: collapse; table-layout: fixed; width: 381px; font: 12px/12px "Liberation Sans", sans-serif; color: #444; }
.profit th, .profit td { padding: 0; height: 12px; font-weight: normal; text-align: left; white-space: nowrap; }
.profit th { color: #8a8a8a; position: relative; right: 15px; width: 65px; }
.profit th.ind { right: 0; padding-left: 25px; width: 161px; }
.profit th.gap { width: 75px; }
.profit th.cur { right: 40px; width: 80px; }
.profit td:first-child, .profit .lit { color: #858585; }
.profit .faint td { color: #2c3636; }
.profit .faint td:first-child, .profit .faint .lit { color: #858585; }

.ea { position: absolute; left: 12px; top: 536px; width: 208px; font: 9px/13px "Liberation Sans", sans-serif; color: #919191; }
.ea h3 { font-size: 13px; line-height: 20px; color: #fff; background: #000; width: 140px; height: 34px; }
.ea h3::after { content: ""; display: block; width: 120px; height: 1px; margin-top: 7px; background: #c6c6c6; }
.ea .row { display: flex; height: 16px; background: #000; white-space: nowrap; }
.ea .row.off { color: #4a4a4a; margin-top: 17px; }
.ea label { width: 56px; flex: none; display: flex; gap: 5px; }
.ea label + label { width: 52px; }
.ea label.w2 { width: 72px; }
.ea input { appearance: none; margin: 0; width: 13px; height: 13px; flex: none; background: #fff; border: 1px solid; border-color: #8b9599 #eaeceb #eaeceb #8b9599; box-shadow: inset 1px 1px #56646c; }
.btns { display: grid; grid-template-columns: 100px 100px; gap: 12px 8px; margin-top: 7px; color: #111c22; }
.btns button { height: 24px; border: 1px solid; border-color: #fff #56646c #56646c #fff; box-shadow: inset 1px 1px #fff; }
.btns .sell { background: #8f8f8f; }
.btns .buy { background: #c6c6c6; }
.btns .all { grid-column: 1 / 3; background: #eaeceb; }
.copy { position: absolute; left: 5px; top: 695px; width: 70px; height: 20px; background: #000; color: #4a4a4a; font: 13px/18px "DejaVu Sans Condensed", sans-serif; }

.mtabs { margin-top: 0; height: 20px; padding-left: 3px; border-bottom: 1px solid #fff; }
.pager { margin: 6px 6px 0 auto; display: flex; gap: 14px; }
.pager i { border: 4px solid transparent; }
.pager .l { border-left: 0; border-right-color: #8b9599; }
.pager .r { border-right: 0; border-left-color: #8b9599; }

.term { height: 136px; flex: none; display: flex; padding: 5px 3px 4px 1px; border-bottom: 1px solid #939ba0; border-top: 1px solid #fff; }
.handle { width: 14px; flex: none; display: flex; flex-direction: column; justify-content: space-between; align-items: center; }
.handle button { font: bold 14px/10px "Liberation Sans", sans-serif; }
.handle span { writing-mode: vertical-rl; transform: rotate(180deg); width: 13px; height: 64px; padding-top: 3px; font-size: 11px; line-height: 13px; color: #44545e; background: #c6c6c6; }
.tbody { flex: 1; min-width: 0; display: flex; flex-direction: column; background: #fff; border-top: 1px solid #939ba0; border-left: 1px solid #939ba0; }
.orders { table-layout: fixed; width: 100%; border-collapse: collapse; }
.c1 { width: 174px; } .c2 { width: 296px; } .c3 { width: 121px; } .c4 { width: 94px; } .c5 { width: 120px; } .c6 { width: 134px; }
.orders th, .orders td { height: 20px; padding: 0 3px; text-align: right; font-weight: normal; border-right: 1px solid #c6c6c6; white-space: nowrap; }
.orders th { height: 24px; padding: 2px 5px 0; border-right-color: #eaeceb; border-bottom: 3px double #c6c6c6; background: linear-gradient(#fff 70%, #eaeceb 70%); }
.orders th:first-child, .orders td:first-child { text-align: left; }
.orders small { font-size: 9px; }
.orders td svg { width: 16px; height: 16px; display: inline-block; vertical-align: -4px; margin: -4px 6px -4px 0; }
.orders td:first-child { padding-left: 2px; }
.orders th:last-child, .orders td:last-child { border-right: 0; }
.orders .tp { background: #8b9496; }
.orders .bal td { background: #c6c6c6; font-weight: bold; border: 0; }
.ttabs { margin-top: auto; height: 18px; flex: none; background: #eaeceb; }

.status { height: 22px; flex: none; display: flex; align-items: center; border-top: 1px solid #fff; border-bottom: 1px solid #56646c; padding: 3px 0 0 2px; }
.status span { padding-left: 5px; height: 16px; line-height: 16px; border-left: 1px solid #939ba0; }
.status .help { flex: 1; padding: 0; border: 0; }
.s1 { width: 116px; } .s2 { width: 102px; } .s3 { width: 70px; } .s4 { width: 66px; }
.status .s5 { width: 161px; display: flex; gap: 41px; }
.s5 svg { width: 24px; height: 13px; margin-top: 1px; }

.taskbar { height: 8px; flex: none; margin: 0 8px; display: flex; gap: 4px; overflow: hidden; background: linear-gradient(90deg, #000 0, #222 8%, #0b0d0e 20%, #1c2b36 50%, #0b0d0e 80%, #1c2b36); }
.orb { width: 34px; height: 34px; margin: 0 150px 0 10px; border-radius: 50%; background: #6a757b; border: 2px solid #9aa3a8; }
.task { width: 42px; background: linear-gradient(135deg, #b0b4b6, #6a757b 60%, #3a4850); border: 1px solid #8b8f91; border-bottom: 0; border-radius: 2px 2px 0 0; }
.task.lit { background: #d2d4d4; }
```
FILE: charts.js
```js
const NS = 'http://www.w3.org/2000/svg';

/* ---- market watch ---- */
const quotes = [
  ['USDC...', '0.930...', '0.930...', 1], ['GBPU...', '1.600...', '1.600...', 1],
  ['EURU...', '1.329...', '1.329...', 0], ['USDJPY', '88.570', '88.589', 0],
  ['USDC...', '0.986...', '0.986...', 1], ['AUDU...', '1.051...', '1.051...', 1],
  ['EURG...', '0.830...', '0.831...', 0], ['EURA...', '1.264...', '1.264...', 0],
  ['EURC...', '1.237...', '1.237...', 1], ['EURJPY', '117.7...', '117.7...', 0],
  ['GBPC...', '1.489...', '1.489...', 0], ['CADJPY', '89.756', '89.796', 0],
  ['GBPJPY', '141.7...', '141.7...', 1], ['AUDN...', '1.251...', '1.252...', 0],
  ['AUDC...', '1.037...', '1.037...', 0], ['AUDC...', '0.978...', '0.979...', 0],
  ['AUDJPY', '93.139', '93.159', 1]
];
document.getElementById('quotes').innerHTML = quotes.map(([s, b, a, up]) =>
  `<tr class="${up ? 'up' : ''}"><td><svg><use href="#i-${up ? 'up' : 'down'}"/></svg>${s}</td><td>${b}</td><td>${a}</td></tr>`).join('');

/* ---- drawing helpers ---- */
function add(root, tag, attrs, text) {
  const el = document.createElementNS(NS, tag);
  for (const k in attrs) el.setAttribute(k, attrs[k]);
  if (text !== undefined) el.textContent = text;
  root.appendChild(el);
  return el;
}
const pairs = (s) => s.trim().split(/\s+/).map((p) => p.split(',').map(Number));
const scale = (ox, oy, sx, sy) => (p) => [ox + p[0] / sx, oy + p[1] / sy];

function curve(root, points, color) {
  const n = points.length;
  let d = `M${points[0][0].toFixed(1)} ${points[0][1].toFixed(1)}`;
  for (let i = 0; i < n - 1; i++) {
    const a = points[Math.max(i - 1, 0)], b = points[i], c = points[i + 1], e = points[Math.min(i + 2, n - 1)];
    const clampY = (y) => Math.min(Math.max(y, Math.min(b[1], c[1])), Math.max(b[1], c[1]));
    const q = [b[0] + (c[0] - a[0]) / 6, clampY(b[1] + (c[1] - a[1]) / 6), c[0] - (e[0] - b[0]) / 6, clampY(c[1] - (e[1] - b[1]) / 6), c[0], c[1]];
    d += 'C' + q.map((v) => v.toFixed(1)).join(' ');
  }
  add(root, 'path', { d, stroke: color });
}
function hline(root, x1, x2, y, color, dash) {
  add(root, 'path', { d: `M${x1} ${y}H${x2}`, stroke: color, 'stroke-dasharray': dash || 'none' });
}
function vline(root, x, y1, y2) {
  add(root, 'path', { d: `M${x} ${y1}V${y2}`, stroke: '#484848', 'stroke-dasharray': '4 3' });
}
function frame(root, x, y, x2, y2) {
  add(root, 'path', { d: `M${x} ${y}H${x2}V${y2}H${x}Z`, stroke: '#fff' });
}
function arrows(root, kind, list) {
  list.forEach(([x, y]) => add(root, 'use', { href: '#a-' + kind, x: Math.round(x) - 6, y: Math.round(kind === 'down' ? y - 13 : y), width: 12, height: 13 }));
}
function axis(root, x, labels, cls) {
  labels.forEach(([t, y, tick]) => {
    if (tick) add(root, 'path', { d: `M${x - 5} ${y}h3`, stroke: '#fff' });
    add(root, 'text', { x, y: y + 3, class: cls + ' white' }, t);
  });
}
function tag(root, x, y, w, t, bg, fg) {
  add(root, 'rect', { x, y: y - 6, width: w, height: 12, fill: bg });
  add(root, 'text', { x: x + 4, y: y + 3, class: 't9', fill: fg }, t);
}
const noise = (i) => { const v = Math.sin(i * 127.1 + 3.7) * 43758.5453; return v - Math.floor(v); };
/* High and low at x, plus whether x sits on a recorded extreme. */
function sample(list, x, reach) {
  const exact = list.find((p) => Math.abs(p[0] - x) <= reach);
  if (exact) return [exact[1], exact[2], true];
  let i = 0;
  while (i < list.length - 2 && list[i + 1][0] < x) i++;
  const a = list[i], b = list[i + 1], t = Math.min(Math.max((x - a[0]) / (b[0] - a[0]), 0), 1);
  return [a[1] + (b[1] - a[1]) * t, a[2] + (b[2] - a[2]) * t, false];
}

/* ---- EURUSD M1 ---- */
{
  const g = document.getElementById('m1-draw');
  const at = scale(190, 120, 2.613, 2.904);
  const range = pairs(`30,95,180 50,115,200 75,125,210 90,200,420 97,320,510 120,400,500 140,330,400 160,310,380 190,300,360 205,230,340 218,195,300 235,230,320
    250,210,330 275,230,320 300,290,400 315,400,525 325,440,525 340,370,470 355,380,450 375,380,470 390,430,540 400,540,700 415,640,850 430,850,1130 440,1000,1200 447,1100,1335
    455,1170,1290 470,1070,1230 485,1035,1120 495,1150,1290 515,1155,1320 535,1170,1310 545,1120,1270 560,1030,1110 585,1050,1105 600,980,1050 605,950,1050 611,1040,1080
    619,1030,1095 635,960,1020 650,970,1015 657,950,1020 670,1045,1100 685,1035,1075 705,985,1050 713,1040,1105 735,1010,1065 745,885,1030 752,940,1010 760,960,1020 790,1010,1060
    810,1050,1160 825,1070,1170 845,1160,1240 852,1200,1370 859,1380,1480 868,1300,1410 877,1250,1380 890,1330,1390 905,1280,1320 920,1070,1190 930,1060,1140
    945,1100,1160 965,990,1040 980,1000,1080 986,975,1100 992,1040,1100 1000,1060,1150 1015,1090,1140 1028,1070,1150 1045,980,1060 1055,970,1020 1080,985,1060 1097,970,1095
    1110,1050,1110 1120,1070,1140 1127,1110,1240 1145,1080,1200 1165,1070,1170 1190,1030,1080 1205,1025,1100 1215,1070,1210 1232,1060,1130 1250,1015,1060 1256,1050,1160 1262,1170,1350
    1267,1190,1300 1272,1080,1290 1285,890,1150 1300,850,1010 1312,590,820 1322,580,700 1335,500,670 1347,490,600 1365,520,660 1380,550,640 1393,590,705 1405,430,590
    1412,370,540 1425,340,530 1435,400,560 1442,490,590 1460,490,560 1480,490,540 1488,510,590 1496,515,550`);
  let d = '';
  for (let x = 201.5, i = 0; x < 763; x += 2, i++) {
    let [hi, lo, exact] = sample(range, (x - 190) * 2.613, 2.6);
    if (!exact) {
      const s = lo - hi;
      hi += s * 0.4 * noise(i);
      lo -= s * 0.4 * noise(i + 500);
    }
    d += `M${x} ${(120 + hi / 2.904).toFixed(0)}V${(120 + lo / 2.904).toFixed(0)}`;
  }
  hline(g, 201, 1044, 237.5, '#444', '9 6 2 6');
  hline(g, 201, 1044, 286.5, '#34424b');
  hline(g, 201, 1044, 484.5, '#444', '9 6 2 6');
  vline(g, 761.5, 136, 844);
  add(g, 'path', { d, stroke: '#858585' });
  curve(g, pairs(`62,46 75,85 90,120 105,150 125,180 140,192 165,190 190,172 210,162 235,160 262,170 285,192 300,215 320,260 340,320 360,385 380,460 398,560 412,660
    425,740 438,820 455,890 475,950 495,985 512,997 532,995 550,975 570,945 590,910 610,885 635,862 655,856 680,861 715,860 740,868 765,890 785,925 805,965
    830,1015 850,1045 870,1062 893,1062 910,1040 930,1000 950,960 970,930 990,918 1030,920 1055,915 1080,930 1105,948 1130,964 1170,971 1200,965 1225,940
    1245,900 1262,850 1280,770 1297,690 1315,610 1332,550 1350,480 1365,430 1385,385 1405,355 1425,342 1445,338 1470,325 1495,315`).map(at), '#5596cb');
  curve(g, pairs(`29,110 60,190 90,260 120,320 150,340 180,330 210,310 235,305 270,320 310,380 340,450 360,520 380,620 395,710 415,800 430,890 450,1000 465,1070 480,1110
    495,1145 515,1162 535,1155 560,1120 590,1080 615,1050 640,1040 690,1036 735,1040 765,1060 795,1110 825,1175 855,1230 875,1240 895,1225 920,1175 950,1120
    980,1090 1010,1070 1050,1062 1090,1070 1120,1085 1160,1102 1190,1105 1220,1085 1245,1040 1270,960 1290,880 1305,810 1325,720 1345,650 1365,600 1385,565
    1405,540 1430,520 1495,520`).map(at), '#3c3c3c');
  curve(g, pairs(`29,285 50,340 80,420 100,480 120,510 150,500 185,465 210,453 240,450 275,460 300,490 320,520 340,570 360,650 380,750 395,840 410,930 425,1000 440,1080
    455,1150 470,1230 485,1280 500,1315 515,1328 535,1320 560,1290 590,1255 620,1225 660,1215 700,1209 745,1218 775,1252 800,1300 825,1360 850,1400 872,1412
    895,1395 925,1355 950,1300 975,1255 1000,1225 1030,1203 1060,1204 1100,1211 1130,1228 1160,1240 1200,1242 1220,1225 1245,1170 1265,1110 1285,1040 1305,950
    1325,870 1345,810 1365,770 1385,740 1410,717 1440,706 1470,710 1495,716`).map(at), '#919191');
  hline(g, 201, 1044, 298.5, '#919191', '12 4 3 4');
  hline(g, 201, 1044, 300.5, '#919191');
  hline(g, 201, 1044, 619.5, '#5596cb');
  arrows(g, 'down', pairs('218,205 605,968 657,953 746,893 986,983 1054,978 1206,1030 1347,500 1425,345').map(at));
  arrows(g, 'up', pairs('96,497 447,1332 619,1095 713,1105 859,1483 1000,1155 1127,1235 1262,1347 1393,697 1487,585').map(at));

  /* currency strength meter */
  const blues = Array(5).fill('#5596cb'), greys = (n) => Array(n).fill('#8f9191'), light = Array(3).fill('#c8c8c8');
  [[408, 5, [...blues, ...greys(4), ...light, ...greys(2)]], [418, 10, [...blues, ...greys(4), ...light]],
    [438, 5, [...blues, ...greys(1)]], [448, 10, [...blues, ...greys(3)]]].forEach(([y, h, cells]) => {
    add(g, 'rect', { x: 885, y, width: cells.length * 7, height: h, fill: '#2c2c2c' });
    cells.forEach((c, i) => add(g, 'rect', { x: 886 + i * 7, y, width: 5, height: h, fill: c }));
  });

  /* SSRC */
  [688.5, 698.5, 805.5, 815.5].forEach((y) => hline(g, 202, 1045, y, '#d2d4d4', '3 2'));
  const ssrc = pairs(`492,493 510,493 522,530 532,547 578,547 590,510 600,430 610,290 620,160 632,124 675,124 685,145 697,193 713,193 720,240 728,350 740,430 752,500 768,545
    780,530 797,450 808,350 822,236 828,330 838,470 847,533 862,538 875,547 897,547 908,510 920,440 928,416 940,415 950,370 965,432 972,390 980,270 990,140 995,124
    1035,124 1052,157 1075,157 1082,180 1090,290 1100,400 1115,487 1145,496 1153,400 1160,300 1172,220 1185,193 1198,225 1208,350 1215,480 1225,545 1280,547
    1295,510 1305,420 1315,260 1328,135 1332,124 1380,124 1393,150 1403,250 1415,430 1425,520 1430,535 1438,500 1450,320 1462,190 1472,160 1485,210 1498,370
    1510,520 1524,547 1535,540 1548,480 1568,200 1575,145 1587,127 1600,155 1610,250 1620,315 1635,340 1643,410 1655,420 1660,438 1670,320 1685,215 1698,150
    1710,124 1732,124 1745,150 1755,230 1768,400 1778,496 1788,420 1798,270 1810,197 1822,245 1832,370 1842,480 1852,515 1869,525`);
  curve(g, ssrc.map(scale(0, 640, 2.45, 3)), '#4b5a62');

  /* HP_DIFF */
  add(g, 'rect', { x: 201, y: 847, width: 563, height: 24, fill: '#3c3c3e' });
  [[236, 288], [316, 328], [366, 372], [388, 438], [464, 478], [524, 564], [582, 602], [628, 650], [658, 660], [662, 670], [676, 710], [724, 738], [754, 756]]
    .forEach(([a, b]) => add(g, 'rect', { x: a, y: 847, width: b - a, height: 24, fill: '#5596cb' }));

  frame(g, 200.5, 135.5, 1044.5, 655.5);
  frame(g, 200.5, 658.5, 1044.5, 844.5);
  frame(g, 200.5, 846.5, 1044.5, 872.5);
  add(g, 'path', { d: 'M757 136h10l-5 5z', style: 'fill:#919191' });
  axis(g, 1050, [['1.33075', 167, 1], ['1.33045', 204, 1], ['1.33015', 242, 1], ['1.32985', 279, 1], ['1.32955', 316, 1], ['1.32925', 353, 1], ['1.32895', 390, 1],
    ['1.32865', 427, 1], ['1.32835', 464, 1], ['1.32805', 501, 1], ['1.32775', 538, 1], ['1.32745', 575, 1], ['1.32715', 612, 1], ['1.32685', 649, 1]], 't9');
  tag(g, 1046, 237, 37, '1.33019', '#262b2b', '#4b5052');
  tag(g, 1046, 286, 37, '1.32979', '#34424b', '#0b1114');
  tag(g, 1046, 300, 37, '1.32968', '#fff', '#000');
  tag(g, 1046, 484, 37, '1.32819', '#2c2c2c', '#0b0b0b');
  tag(g, 1046, 619, 37, '1.32709', '#5596cb', '#0b1114');
  axis(g, 1048, [['1.3', 666], ['0.9', 688], ['0.75', 698], ['0.00', 751], ['-0.75', 805], ['-0.9', 815], ['-1.3', 838], ['1', 854], ['0', 866]], 't10');
  ['04:02', '04:34', '05:06', '05:38', '06:10', '06:42', '07:14', '07:46', '08:18'].forEach((t, i) => {
    const x = 201 + i * 64;
    add(g, 'path', { d: `M${x + 0.5} 873v3`, stroke: '#fff' });
    add(g, 'text', { x, y: 885, class: 't9 white' }, '17 Jan ' + t);
  });
}

/* ---- EURUSD M5 ---- */
{
  const g = document.getElementById('m5-draw');
  const at = scale(1090, 0, 1.853, 3);
  const range = pairs(`37,1430,1600 44,1400,1560 51,1388,1470 58,1215,1410 70,1220,1400 82,1190,1350 95,1010,1160 102,890,1040 110,890,1170 118,1060,1280 125,1110,1270
    140,1040,1230 150,1165,1280 160,1130,1240 175,1120,1210 190,1130,1240 200,1230,1590 210,1560,1640 215,1440,1600 225,1390,1530 235,1440,1620 245,1440,1620
    260,1430,1480 273,1325,1450 285,1320,1430 297,1250,1380 310,1245,1320 325,1130,1200 335,1200,1260 350,1215,1290 363,1260,1330 375,1215,1310 385,1130,1240
    400,1190,1260 410,1160,1310 420,1280,1420 430,1320,1440 445,1320,1400 455,1330,1400 463,1150,1350 475,1130,1210 490,1170,1200 503,1120,1190 511,1110,1200
    520,1190,1320 535,1240,1310 545,1230,1390 558,1370,1450 565,1350,1470 575,1400,1480 588,1260,1450 600,1230,1320 608,1060,1260 615,930,1090 628,800,980
    640,590,790 650,520,700 665,530,640 680,570,650 690,550,690 696,470,620 705,530,690 715,560,610 725,550,650 735,600,710 745,660,720 750,700,980 765,830,900
    775,760,890 785,720,830 795,720,840 805,740,900 813,880,990 825,870,1010 835,960,1200 842,1180,1400 850,1450,1690 860,1500,1620 870,1550,1690 880,1480,1580
    890,1430,1500 905,1370,1500 915,1400,1500 925,1420,1510 933,1330,1480 942,1360,1480 955,1460,1570 965,1550,1830 970,1640,1830 978,1620,1760 985,1500,1640
    995,1430,1490 1010,1450,1560 1025,1400,1480 1035,1390,1500 1047,1480,1630 1060,1420,1510 1072,1440,1500 1080,1440,1700 1088,1300,1510 1095,1060,1320
    1103,970,1120 1110,1010,1130 1118,920,1170 1125,860,1040 1133,920,1070 1141,960,1050 1148,1000,1075`);
  let wicks = '', bodies = '';
  for (let x = 1109.5, i = 0; x < 1712; x += 4, i++) {
    const [hi, lo] = sample(range, (x - 1090) * 1.853, 3.6);
    const top = hi / 3, bot = lo / 3, s = bot - top;
    const b1 = Math.round(top + s * (0.05 + 0.5 * noise(i))) + 0.5, b2 = Math.round(bot - s * (0.02 + 0.35 * noise(i + 300))) + 0.5;
    wicks += `M${x} ${top.toFixed(0)}V${b1}M${x} ${b2}V${bot.toFixed(0)}`;
    bodies += `M${x - 1} ${b1}h2V${b2}h-2Z`;
  }
  hline(g, 1110, 1880, 281.5, '#a0a0a0', '9 3 2 3');
  hline(g, 1110, 1881, 323.5, '#34424b');
  hline(g, 1110, 1880, 488.5, '#a0a0a0', '9 3 2 3');
  vline(g, 1705.5, 136, 826);
  add(g, 'path', { d: wicks, stroke: '#919191' });
  add(g, 'path', { d: bodies, stroke: '#8a8a8a', style: 'fill:#000' });
  curve(g, pairs(`36,568 55,576 80,574 105,567 120,574 140,578 150,598 175,625 195,645 200,660 220,690 240,712 258,717 280,705 320,698 355,693 380,712 410,738 430,755
    455,770 475,782 512,787 520,790 545,755 575,710 600,640 625,560 645,490 665,440 685,415 705,405 720,412 740,450 765,520 790,620 815,740 835,840 850,920
    870,990 890,1060 905,1095 930,1135 950,1165 965,1173 985,1160 1005,1130 1030,1098 1050,1055 1075,1005 1100,940 1120,890 1145,840`).map(at), '#5596cb');
  curve(g, pairs(`36,1258 60,1264 105,1258 145,1265 175,1285 205,1320 230,1338 250,1342 280,1332 310,1315 350,1290 385,1268 450,1270 475,1265 495,1250 520,1228 545,1190
    570,1130 590,1070 615,980 640,890 665,810 685,770 705,758 720,768 740,800 760,860 785,940 800,1010 820,1090 840,1190 860,1290 880,1360 905,1420 935,1475
    960,1500 975,1500 1000,1475 1030,1425 1055,1380 1080,1325 1100,1265 1120,1225 1145,1185`).map(at), '#4b5a62');
  curve(g, pairs(`345,1897 365,1860 390,1820 415,1790 430,1788 460,1767 490,1740 512,1700 520,1680 548,1615 565,1560 580,1500 600,1415 620,1330 640,1240 660,1175
    680,1130 703,1113 725,1128 745,1170 770,1240 795,1320 820,1430 845,1530 870,1640 895,1710 920,1770 940,1810 960,1830 975,1830 1000,1805 1030,1750
    1055,1720 1080,1665 1100,1610 1120,1565 1147,1525`).map(at), '#919191');
  hline(g, 1110, 1881, 333.5, '#a0a0a0', '9 4 3 4');
  hline(g, 1110, 1881, 334.5, '#a0a0a0');
  arrows(g, 'down', pairs('110,898 325,1133 511,1108 696,484 933,1328 1030,1400 1125,853').map(at));
  arrows(g, 'up', pairs('212,1620 428,1442 561,1465 850,1698 968,1828 1080,1711').map(at));

  [665.5, 676.5, 786.5, 797.5].forEach((y) => hline(g, 1110, 1882, y, '#d2d4d4', '3 2'));
  curve(g, pairs(`36,515 45,480 60,380 70,260 80,180 92,110 100,92 110,85 122,92 135,120 150,190 165,310 178,430 190,520 215,550 240,510 258,460 272,360 286,250 295,150
    305,105 316,86 335,86 350,105 365,165 380,215 393,260 405,370 420,430 440,443 452,460 460,460 467,430 480,300 492,190 505,138 511,128 522,155 535,250
    548,400 560,475 577,520 590,480 605,350 615,240 630,150 645,100 656,86 708,86 718,115 730,220 745,370 760,450 780,505 860,506 876,520 890,505 905,450
    925,320 940,200 948,165 958,230 972,370 985,447 1000,370 1015,240 1030,155 1043,135 1055,155 1068,199 1097,199 1110,160 1125,115 1140,92 1147,98`)
    .map(scale(1090, 630, 1.853, 3)), '#4b5a62');

  const rising = [[1109, 1155], [1220, 1283], [1324, 1351], [1388, 1467], [1616, 1713]];
  for (let x = 1109; x < 1711; x += 4) {
    const up = rising.some(([a, b]) => x >= a && x < b);
    add(g, 'rect', { x, y: 830, width: 3, height: 20, fill: up ? '#5596cb' : '#3c3c3e' });
  }
  add(g, 'text', { x: 1181, y: 843, class: 't9 white' }, '00');

  frame(g, 1108.5, 134.5, 1881.5, 632.5);
  frame(g, 1108.5, 634.5, 1881.5, 827.5);
  frame(g, 1108.5, 829.5, 1881.5, 851.5);
  add(g, 'path', { d: 'M1712 135h10l-5 5z', style: 'fill:#919191' });
  axis(g, 1887, [['1.33140', 156, 1], ['1.33105', 192, 1], ['1.33070', 228, 1], ['1.33035', 265, 1], ['1.33000', 301, 1], ['1.32930', 373, 1], ['1.32895', 409, 1],
    ['1.32860', 445, 1], ['1.32825', 482, 1], ['1.32790', 518, 1], ['1.32755', 554, 1], ['1.32720', 590, 1], ['1.32685', 626, 1]], 't9');
  tag(g, 1883, 322, 41, '1.32979', '#34424b', '#0b1114');
  tag(g, 1883, 334, 41, '1.32968', '#fff', '#000');
  axis(g, 1884, [['1.3', 642], ['0.9', 665], ['0.75', 676], ['0.00', 731], ['-0.75', 786], ['-0.9', 797], ['-1.3', 821], ['1', 836], ['0', 845]], 't9');
  ['16 Jan 2013', '16 Jan 21:30', '16 Jan 22:50', '17 Jan 00:10', '17 Jan 01:30', '17 Jan 02:50', '17 Jan 04:10', '17 Jan 05:30', '17 Jan 06:50', '17 Jan 08:10'].forEach((t, i) => {
    const x = 1109 + i * 64;
    add(g, 'path', { d: `M${x + 0.5} 852v3`, stroke: '#fff' });
    add(g, 'text', { x: x - 1, y: 864, class: 't9 white' }, t);
  });
}
```
